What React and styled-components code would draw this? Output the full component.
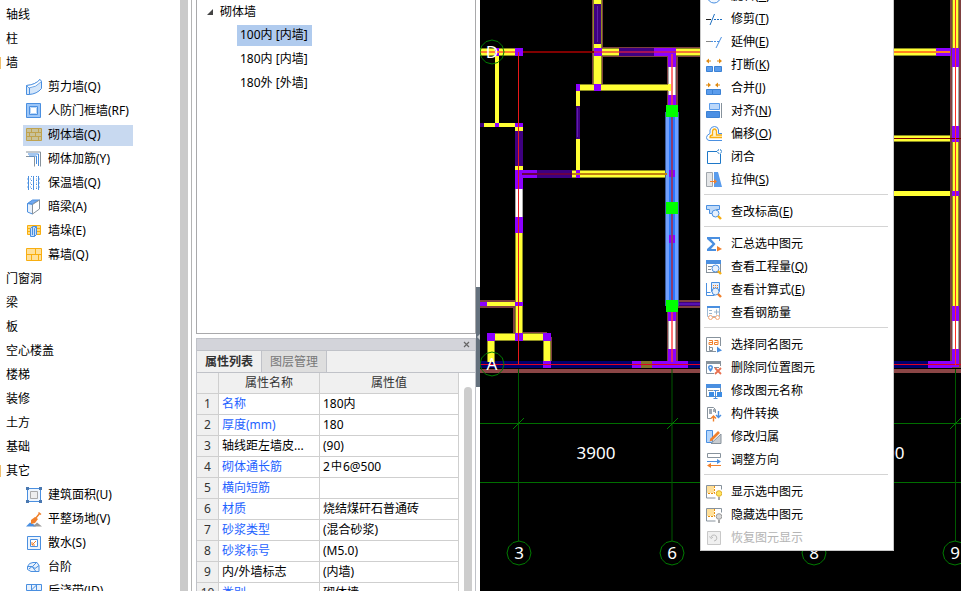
import React from "react";
import styled, { createGlobalStyle, css } from "styled-components";

const GlobalStyle = createGlobalStyle`
  * { box-sizing: border-box; }
  body { margin: 0; overflow: hidden; background: #fff; }
  body, button, table {
    font-family: "Noto Sans", "Noto Sans CJK SC", sans-serif;
    font-size: 12px;
    line-height: 20px;
    color: #000;
  }
  ul { list-style: none; margin: 0; padding: 0; }
  button { border: 0; background: none; padding: 0; text-align: left; white-space: nowrap; }
`;

const BLUE = "#4a8fe0";
const PALE = "#d4e6fa";
const ORANGE = "#f0802c";
const GOLD = "#f8ae10";
const GRAY = "#87929c";

/* ---------- icons ---------- */

const IconSvg = styled.svg`
  width: 16px;
  height: 16px;
  flex: none;
  fill: none;
  stroke-width: 1;
`;

const lens = (c = ORANGE) => (
  <>
    <circle cx="9.5" cy="9.5" r="3.5" fill="#e8f1fc" stroke={BLUE} />
    <path d="M12 12l3 3" stroke={c} strokeWidth="2.4" />
  </>
);
const frame = (
  <>
    <rect x="0.5" y="1.5" width="14" height="12" fill="#fff" stroke={GRAY} />
    <path d="M0 1h15v4H0z" fill={BLUE} />
  </>
);
const bulb = (fill, stroke) => (
  <>
    <path d="M0.5 1.5h15M0.5 1.5v12.5h9M15.5 1.5v4" stroke={GRAY} />
    <path d="M1 2h7v7H1z" fill="#ffe09a" />
    <path d="M8.5 2v7.5H1" stroke="#e89010" strokeDasharray="2 1" />
    <circle cx="13" cy="9.5" r="2.8" fill={fill} stroke={stroke} />
    <path d="M12 13h2v3h-2z" fill="#a8a8a8" />
  </>
);

const ICONS = {
  shearWall: (
    <>
      <path d="M0.5 6.5Q9 6 14 0.5l1.5 2v7Q11 15 3 15.5H0.5z" fill={PALE} stroke={BLUE} />
      <path d="M0.5 6.500L3 9Q10 8.500 15.500 2.500L14 0.500Q9 6 0.500 6.500z" fill="#fff" stroke={BLUE} strokeWidth="0.800" />
      <path d="M3.500 9v6" stroke={BLUE} />
    </>
  ),
  doorFrame: (
    <>
      <path d="M0.500 0.500h14v14h-14z" fill="#9cc6f8" stroke={BLUE} />
      <path d="M3.500 3.500h8v8h-8z" fill="#fff" stroke={BLUE} />
      <path d="M4.500 4.500h6v6h-6z" fill="#fff" stroke="#b8d6f8" />
    </>
  ),
  brick: (
    <>
      <path d="M0.500 1.500h15v12h-15z" fill="#c9c29a" stroke="#bfa24e" />
      <path d="M0.500 5.500h15M0.500 9.500h15M5.500 1.500v4M12.500 1.500v4M3.500 5.500v4M9.500 5.500v4M5.500 9.500v4M12.500 9.500v4" stroke="#bfa24e" />
    </>
  ),
  rebar: (
    <>
      <path d="M0 1h14.500v14.500M0 5.500h8.500v10" stroke={GRAY} />
      <path d="M2 3h10.500v12" stroke={BLUE} />
      <path d="M3 5h7.500v8" stroke={BLUE} />
    </>
  ),
  insulate: (
    <>
      <path d="M2.500 1v14M7.500 1v14M12.500 1v14" stroke={BLUE} />
      <path d="M5.500 1v14M10.500 1v14" stroke={BLUE} strokeDasharray="1 3" />
      <path d="M1 4h13M1 8h13M1 12h13" stroke={BLUE} strokeDasharray="1 2" strokeWidth="0.800" />
    </>
  ),
  hiddenBeam: (
    <>
      <path d="M1.500 4.500l5-3.500h7l-7 4z" fill="#70a8f0" stroke={BLUE} />
      <path d="M6.500 5.500l7-4.500v9l-7 5z" fill="#fff" stroke={GRAY} />
      <path d="M1.500 4.500l5 1v9.500l-5-2z" fill="#e8f1fc" stroke={BLUE} />
      <path d="M6.500 15V5.500" stroke={GRAY} />
    </>
  ),
  pier: (
    <>
      <path d="M1.500 2.500h13v9h-13z" fill="#ffdc80" stroke={GOLD} />
      <path d="M1.500 5.500h13M1.500 8.500h13" stroke={GOLD} />
      <path d="M4.500 5.500l2-2h4v8l-2 2h-4z" fill="#c8defa" stroke={BLUE} />
      <path d="M8.500 5.500v8M8.500 5.500l2-2M6.500 4v8" stroke={BLUE} />
    </>
  ),
  curtain: (
    <>
      <path d="M0.500 1.500h15v12h-15z" fill="#ffe09a" stroke={GOLD} />
      <path d="M0.500 7.500h15M9.500 1.500v6M5.500 7.500v6M12.500 7.500v6" stroke={GOLD} />
    </>
  ),
  area: (
    <>
      <path d="M1.500 1.500h13v13h-13z" fill="#eef5fd" stroke={BLUE} />
      <path d="M4.500 4.500h7v7h-7z" fill="#eee" stroke="#aaa" />
      <path d="M0 0h3v3H0zM13 0h3v3h-3zM0 13h3v3H0zM13 13h3v3h-3z" fill="#4a78b0" />
    </>
  ),
  ground: (
    <>
      <path d="M0 15.500l4-4 4 2 2 2z" fill={BLUE} />
      <path d="M7 15.500l4-4 5 4z" fill="#999" />
      <path d="M5 9l4-3 3 2-3 4-4 1z" fill={ORANGE} />
      <path d="M9 8l5-6M12.500 1.500l2.500 2" stroke={ORANGE} strokeWidth="1.500" />
    </>
  ),
  apron: (
    <>
      <path d="M1.500 1.500h13v13h-13z" fill="#eef5fd" stroke={BLUE} />
      <path d="M4.500 4.500h7v7h-7z" fill="#fff" stroke={BLUE} />
      <path d="M10 6l-4 4M6 7v3h3" stroke={ORANGE} />
    </>
  ),
  step: (
    <>
      <path d="M1.500 7.500Q3 3.500 7 3.500h4l2 3v6H5l-3.500-2z" fill="#e8f1fc" stroke={BLUE} />
      <path d="M1.500 7.500h5l4-4M6.500 7.500l2.500 2 4-3M3 10l3-2.500 4 5" stroke={BLUE} />
    </>
  ),
  strip: (
    <>
      <path d="M0.500 1.500h15v6h-15z" fill="#e8f1fc" stroke={BLUE} />
      <path d="M5.500 1.500v11M10.500 1.500v11M5.500 7l5-5M3 7.500v5h9v-5" stroke={BLUE} />
    </>
  ),
  rotate: <circle cx="8" cy="8.500" r="6.500" stroke={BLUE} fill="#f2f8ff" />,
  trim: (
    <>
      <path d="M0 8.500h5" stroke="#222" />
      <path d="M8 8.500h8" stroke="#1e6fc0" strokeDasharray="2 1" />
      <path d="M4 14L8.500 3" stroke="#1e6fc0" />
    </>
  ),
  extend: (
    <>
      <path d="M0 7.500h5" stroke="#888" />
      <path d="M5 7.500h8" stroke={BLUE} strokeDasharray="2 1" />
      <path d="M10 14l5.500-11" stroke={BLUE} />
    </>
  ),
  split: (
    <>
      <path d="M0.500 9.500h6v5h-6zM8.500 9.500h7v5h-7z" fill="#5a9cec" stroke="#3c82d4" />
      <path d="M1 4h4M11 4h4" stroke="#e08a10" />
      <path d="M0 4l3-2.500v5zM16 4l-3-2.500v5z" fill="#e08a10" />
    </>
  ),
  merge: (
    <>
      <path d="M0.500 9.500h6v5h-6zM6.500 9.500h8v5h-8z" fill="#5a9cec" stroke="#3c82d4" />
      <path d="M0 5h4M10 5h4" stroke="#e08a10" />
      <path d="M5 5L2 2.500v5zM9 5l3-2.500v5z" fill="#e08a10" />
    </>
  ),
  align: (
    <>
      <path d="M3.500 0.500h10v6h-10z" fill="#bcd8fa" stroke="#5a9cec" />
      <path d="M0.500 8.500h13v6h-13z" fill="#4a8fe4" stroke="#3c82d4" />
      <path d="M15.500 0v15" stroke={GRAY} />
    </>
  ),
  offset: (
    <>
      <path d="M16 14.500H3Q0.500 14 0.500 11.500T4 7.500V4Q5 0.500 8.500 0.500T12.500 4v3.500H16" stroke={BLUE} />
      <path d="M16 11.500H4Q4 9 6.500 9V5Q7 3 8.500 3T10.500 5v4H16" fill="#fff4d0" stroke={GOLD} strokeWidth="1.300" />
    </>
  ),
  close: (
    <>
      <path d="M11 2.500H1.500v12h13V5" stroke="#1e78c8" />
      <circle cx="13.500" cy="2.500" r="2" stroke="#1e78c8" strokeDasharray="2 1" />
    </>
  ),
  stretch: (
    <>
      <path d="M0.500 0.500h6v14h-6z" fill="#e4e6e8" stroke="#a0a6ac" />
      <path d="M8 0h4l4 15H8z" fill="#5a9cec" />
      <path d="M4 9.500h5" stroke={ORANGE} />
      <path d="M11 9.500L8 7v5z" fill={ORANGE} />
    </>
  ),
  level: (
    <>
      <path d="M0.500 1.500h13v4h-3v4h-7V5.500h-3z" fill="#c0daf8" stroke={BLUE} />
      {lens(GOLD)}
    </>
  ),
  sum: (
    <>
      <path d="M14 1H1v2l5.500 5L1 13v2h9v-2H5l4.500-5L5 3h8v2h1z" fill={BLUE} />
      <path d="M11 10v5.500l5-2.500z" fill={ORANGE} />
    </>
  ),
  quantity: (
    <>
      {frame}
      <path d="M2 7.500h4M2 10.500h3" stroke={GRAY} />
      {lens(GOLD)}
    </>
  ),
  formula: (
    <>
      <path d="M0.500 1v12.500h8M0.500 10.500h4" stroke={BLUE} />
      <path d="M5.500 0.500h8v9h-8z" fill="#dfeeff" stroke={BLUE} />
      <path d="M7 3.500h6M7 5.500h6" stroke={ORANGE} strokeDasharray="1 1" />
      {lens()}
    </>
  ),
  steel: (
    <>
      <path d="M1.500 1.500h12v10h-12z" fill="#fff" stroke="#9cb8d4" />
      <path d="M1 1h13v2H1z" fill={BLUE} />
      <path d="M3 5.500h3M3 8.500h3M8 7h5M10.500 4.500v5" stroke="#9ab4cc" />
      <circle cx="4.500" cy="12.500" r="2" fill="#fff" stroke="#f4a878" />
      <circle cx="11.500" cy="12.500" r="2" fill="#fff" stroke="#f4a878" />
      <path d="M6.500 12.500h3" stroke="#f4a878" />
    </>
  ),
  sameName: (
    <>
      <path d="M10 14.500H0.500v-14h14V9" stroke={GRAY} />
      <path d="M3 3.500h3.500v4H3v-2h3M8.500 3.500H12v4H8.500v-2h3" stroke={ORANGE} />
      <path d="M3.500 9v4.500h3v-3h-3" stroke={GRAY} />
      <path d="M11 9.500v6l5-2z" fill={BLUE} />
    </>
  ),
  remove: (
    <>
      <path d="M14.500 6V1.500h-14v12H8" stroke={GRAY} />
      <path d="M0 1h15v3H0z" fill={GRAY} />
      <path d="M4.500 12Q2 9 2 7.500a2.500 2.500 0 0 1 5 0Q7 9 4.500 12z" fill={BLUE} />
      <circle cx="4.500" cy="7.500" r="1" fill="#fff" />
      <path d="M8 7.500h5" stroke={GRAY} />
      <path d="M9 8l6 6M15 8l-6 6" stroke="#e87050" strokeWidth="1.800" />
    </>
  ),
  rename: (
    <>
      {frame}
      <path d="M2 7.500h5M8 7.500h5" stroke={GRAY} />
      <path d="M3 9h5v5H3zM11 9h5v5h-5z" fill="#3c8ce4" />
      <path d="M7.500 7.500h4M9.500 8v7M7.500 15.500h4" stroke={BLUE} />
    </>
  ),
  convert: (
    <>
      <path d="M5 12.500H1.500v-11h6l2 2V7" stroke={GRAY} />
      <path d="M3 3h3v5H3zM7 3h2v3H7z" fill="#a0aab4" />
      <path d="M7.500 15.500V11M5 12.500L7.500 10l2.500 2.500" stroke={ORANGE} strokeWidth="1.400" />
      <path d="M12.500 5v6M10 9l2.500 2.500L15 9" stroke={BLUE} strokeWidth="1.400" />
    </>
  ),
  belong: (
    <>
      <path d="M0.500 1.500h6v12h-6z" fill="#b4d6fc" stroke={BLUE} />
      <path d="M5 14.500L15 5v9.500z" fill="#c8ccd0" stroke={GRAY} />
      <path d="M5 11l8-8" stroke={ORANGE} strokeWidth="2.600" />
      <path d="M3.500 12.500l1-3 2 2z" fill={ORANGE} />
    </>
  ),
  direction: (
    <>
      <path d="M1.500 1.500h13v4h-13z" stroke={GRAY} />
      <path d="M1 9.500h11" stroke={BLUE} />
      <path d="M15 9.500l-4-2.500v5z" fill={BLUE} />
      <path d="M4 13.500h11" stroke={ORANGE} />
      <path d="M1 13.500l4-2.500v5z" fill={ORANGE} />
    </>
  ),
  show: bulb("#ffe45c", "#e0b030"),
  hide: bulb("#d8d8d8", "#999"),
  restore: (
    <>
      <path d="M1.500 1.500h13v13h-13z" fill="#f0f0f0" stroke="#c8c8c8" />
      <path d="M5 7a3 3 0 1 1 3 4M3.500 6.500L5 8.500l2-1.500" stroke="#bbb" />
    </>
  ),
};

const Icon = ({ name }) => (
  <IconSvg viewBox="0 0 16 16" aria-hidden="true">{ICONS[name]}</IconSvg>
);

/* ---------- layout ---------- */

const Page = styled.main`
  display: grid;
  grid-template-columns: 192px 284px 4px minmax(0, 1fr);
  grid-template-rows: minmax(0, 1fr);
  height: 100vh;
  overflow: hidden;
`;

const Sidebar = styled.nav`
  display: flex;
  min-height: 0;
  overflow: hidden;
  border-right: 1px solid #b4b4b4;
`;

const SidebarTree = styled.ul`
  flex: 1;
  padding-top: 3px;
`;

const SidebarScroll = styled.div`
  width: 8px;
  margin-right: 3px;
  background: #cacaca;
`;

const Category = styled.button`
  display: flex;
  align-items: center;
  width: 100%;
  height: 24px;
  padding-left: 5px;
  &::before {
    content: "";
    width: 1px;
    height: 12px;
    margin: 0 5px 0 -5px;
    background: ${(p) => (p.$open ? "#efbe6c" : "transparent")};
  }
`;

const CategoryItems = styled.ul`
  width: max-content;
  margin-left: 23px;
`;

const TreeRow = styled.li`
  display: flex;
  align-items: center;
  height: 24px;
`;

const TreeButton = styled.button`
  display: flex;
  align-items: center;
  gap: 6px;
  width: 100%;
  height: 21px;
  padding: 0 4px 0 3px;
  background: ${(p) => (p.$selected ? "#c8d9f0" : "transparent")};
`;

const MiddleColumn = styled.div`
  display: grid;
  grid-template-rows: minmax(0, 334fr) minmax(0, 253fr);
  gap: 4px;
  padding-left: 4px;
`;

const ComponentPanel = styled.section`
  border: solid #a9a9ab;
  border-width: 0 1px 1px;
  overflow: hidden;
`;

const ComponentGroup = styled.button`
  display: flex;
  align-items: center;
  gap: 7px;
  height: 23px;
  padding-left: 10px;
`;

const Twisty = styled.svg`
  width: 6px;
  height: 6px;
`;

const ComponentList = styled.ul`
  width: max-content;
  margin-left: 40px;
`;

const ComponentButton = styled(TreeButton)`
  background: ${(p) => (p.$selected ? "#b0cbee" : "transparent")};
`;

const PropertyPanel = styled.section`
  display: flex;
  flex-direction: column;
  overflow: hidden;
  border: 1px solid #c0c2c8;
  border-bottom: 0;
  background: #f0f0f0;
`;

const TitleBar = styled.header`
  display: flex;
  flex: none;
  justify-content: flex-end;
  align-items: center;
  height: 12px;
  padding-right: 5px;
  background: #d3d4da;
  border-bottom: 1px solid #c0c2c8;
`;

const CloseButton = styled.button`
  display: flex;
  width: 7px;
  height: 7px;
`;

const Tabs = styled.div`
  display: flex;
  flex: none;
  height: 22px;
  border-bottom: 1px solid #c0c2c8;
`;

const Tab = styled.button`
  padding: 0 8px;
  font-weight: ${(p) => (p.$active ? 700 : 400)};
  border-right: 1px solid #c0c2c8;
  color: ${(p) => (p.$active ? "#333" : "#777")};
  background: ${(p) => (p.$active ? "#f0f0f0" : "#dedede")};
`;

const TableArea = styled.div`
  display: flex;
  flex: 1;
  min-height: 0;
`;

const PropertyTable = styled.table`
  flex: 1;
  height: max-content;
  table-layout: fixed;
  border-collapse: separate;
  border-spacing: 0;
  background: #fff;
`;

const cell = css`
  height: 21px;
  padding: 0 3px;
  border: solid #cfcfcf;
  border-width: 0 1px 1px 0;
  font-weight: 400;
  text-align: left;
  white-space: nowrap;
  overflow: hidden;
`;

const HeadCell = styled.th`
  ${cell}
  width: ${(p) => p.$width || "auto"};
  text-align: center;
  color: #333;
  background: #f0f0f0;
`;

const NumberCell = styled.th`
  ${cell}
  text-align: center;
  color: #333;
  background: #f0f0f0;
`;

const NameCell = styled.td`
  ${cell}
  color: ${(p) => (p.$plain ? "#000" : "#1e62ff")};
`;

const ValueCell = styled.td`
  ${cell}
`;

const RebarMark = styled.span`
  margin: 0 1px;
  font-size: 11px;
  line-height: 1;
  vertical-align: 1px;
`;

const TableGutter = styled.div`
  width: 16px;
  padding: 14px 3px 0 5px;
  background: #fff;
`;

const TableThumb = styled.div`
  height: 100%;
  border-radius: 4px 4px 0 0;
  background: #cdcdcd;
`;

const Splitter = styled.div`
  display: flex;
  flex-direction: column;
  justify-content: flex-start;
  padding-top: 287px;
`;

const SplitterHandle = styled.button`
  display: flex;
  align-items: center;
  justify-content: flex-end;
  height: 100px;
  background: #64717d;
`;

const CanvasArea = styled.section`
  position: relative;
  overflow: hidden;
  background: #000;
`;

const Drawing = styled.svg`
  display: block;
  width: 100%;
  height: 100%;
  font-family: "Noto Sans", sans-serif;
  font-size: 17px;
`;

const ContextMenu = styled.ul`
  position: absolute;
  left: 220px;
  top: -17px;
  width: 194px;
  padding-bottom: 1px;
  background: #fff;
  border: 1px solid #c8c8c8;
`;

const MenuButton = styled.button`
  display: flex;
  align-items: center;
  gap: 9px;
  width: 100%;
  height: 23px;
  padding-left: 5px;
  &:disabled { color: #b4b4b4; }
`;

const MenuDivider = styled.li`
  height: 1px;
  margin: 3px 5px 5px 3px;
  background: #d4d4d4;
`;

/* ---------- data ---------- */

const CATEGORIES = [
  { label: "轴线" },
  { label: "柱" },
  {
    label: "墙",
    items: [
      ["shearWall", "剪力墙(Q)"],
      ["doorFrame", "人防门框墙(RF)"],
      ["brick", "砌体墙(Q)", true],
      ["rebar", "砌体加筋(Y)"],
      ["insulate", "保温墙(Q)"],
      ["hiddenBeam", "暗梁(A)"],
      ["pier", "墙垛(E)"],
      ["curtain", "幕墙(Q)"],
    ],
  },
  { label: "门窗洞" },
  { label: "梁" },
  { label: "板" },
  { label: "空心楼盖" },
  { label: "楼梯" },
  { label: "装修" },
  { label: "土方" },
  { label: "基础" },
  {
    label: "其它",
    items: [
      ["area", "建筑面积(U)"],
      ["ground", "平整场地(V)"],
      ["apron", "散水(S)"],
      ["step", "台阶"],
      ["strip", "后浇带(JD)"],
    ],
  },
];

const COMPONENTS = ["100内 [内墙]", "180内 [内墙]", "180外 [外墙]"];

const PROPERTIES = [
  ["名称", "180内"],
  ["厚度(mm)", "180"],
  ["轴线距左墙皮...", "(90)", true],
  ["砌体通长筋", <>2<RebarMark>中</RebarMark>6@500</>],
  ["横向短筋", ""],
  ["材质", "烧结煤矸石普通砖"],
  ["砂浆类型", "(混合砂浆)"],
  ["砂浆标号", "(M5.0)"],
  ["内/外墙标志", "(内墙)", true],
  ["类别", "砌体墙"],
];

const MENU_GROUPS = [
  [
    ["rotate", "旋转", "R"],
    ["trim", "修剪", "T"],
    ["extend", "延伸", "E"],
    ["split", "打断", "K"],
    ["merge", "合并", "J"],
    ["align", "对齐", "N"],
    ["offset", "偏移", "O"],
    ["close", "闭合"],
    ["stretch", "拉伸", "S"],
  ],
  [["level", "查改标高", "E"]],
  [
    ["sum", "汇总选中图元"],
    ["quantity", "查看工程量", "Q"],
    ["formula", "查看计算式", "E"],
    ["steel", "查看钢筋量"],
  ],
  [
    ["sameName", "选择同名图元"],
    ["remove", "删除同位置图元"],
    ["rename", "修改图元名称"],
    ["convert", "构件转换"],
    ["belong", "修改归属"],
    ["direction", "调整方向"],
  ],
  [
    ["show", "显示选中图元"],
    ["hide", "隐藏选中图元"],
    ["restore", "恢复图元显示", null, true],
  ],
];

/* ---------- floor plan ---------- */

const BROWN = "#7e4040";
const NAVY = "#00006e";
const Y = "#ffff33";
const P = "#8c00ff";
const I = "#3e0080";
const W = "#ffffff";
const EDGES = { [Y]: "#8c8c20", [W]: "#a8a8a8" };

// [x, y, width, height, fill]
const WALLS = [
  [480, 369, 481, 4, "#8b4646"], [480, 361, 481, 7, NAVY],
  [480, 300, 42, 8, BROWN], [513, 304, 3, 30, BROWN], [519, 332, 28, 3, BROWN], [549, 337, 3, 24, BROWN],
  [592, 0, 11, 86, BROWN], [601, 47, 99, 10, BROWN], [667, 56, 11, 50, BROWN], [667, 312, 11, 50, BROWN],
  [678, 300, 22, 8, BROWN], [950, 0, 11, 368, BROWN],
  [480, 48, 35, 8, Y], [495, 48, 4, 8, P], [515, 48, 8, 8, P],
  [495, 56, 4, 67, Y], [480, 123, 4, 4, I], [484, 123, 31, 4, Y], [495, 123, 4, 4, P], [515, 123, 8, 4, P],
  [515, 127, 8, 4, Y], [515, 131, 8, 35, I], [515, 166, 8, 4, Y], [515, 170, 8, 19, P],
  [515, 189, 8, 28, W], [515, 217, 8, 16, P], [515, 233, 8, 100, Y], [515, 302, 8, 4, P],
  [480, 302, 7, 4, P], [487, 302, 28, 4, Y], [488, 333, 62, 8, Y], [487, 341, 8, 21, Y], [543, 341, 8, 20, Y],
  [487, 333, 8, 8, P], [515, 333, 8, 8, P], [543, 333, 8, 8, P], [543, 361, 8, 7, P],
  [522, 170, 15, 8, P], [537, 170, 35, 8, I], [572, 170, 95, 8, Y],
  [576, 91, 4, 79, Y], [576, 106, 4, 33, I], [576, 170, 4, 8, P], [580, 84, 91, 7, Y], [576, 84, 4, 7, P],
  [593, 0, 9, 84, Y], [594, 4, 7, 40, I], [594, 48, 8, 8, P], [594, 84, 7, 7, P],
  [602, 48, 98, 8, Y], [619, 48, 35, 8, I], [654, 48, 22, 8, P],
  [668, 56, 8, 50, P], [668, 67, 8, 28, W], [668, 84, 3, 7, Y],
  [668, 312, 8, 50, P], [668, 321, 8, 28, W],
  [632, 361, 56, 7, P], [641, 361, 11, 7, "#80702a"], [678, 302, 22, 4, I],
  [894, 48, 56, 8, Y], [936, 48, 15, 8, P], [894, 135, 56, 7, Y], [894, 191, 56, 5, Y],
  [952, 0, 7, 306, Y], [952, 48, 7, 19, P], [952, 67, 7, 59, W], [952, 126, 7, 16, P], [952, 191, 7, 5, P],
  [952, 306, 7, 15, P], [952, 321, 7, 28, W], [952, 349, 7, 18, P], [928, 361, 24, 7, P],
  [665, 112, 14, 194, "#3c5c9c"], [666, 112, 12, 194, "#6f9fff"], [669, 112, 6, 194, "#2878ff"],
  [669, 170, 6, 7, P], [669, 235, 6, 8, P],
];

// [path, colour, width]
const AXES = [
  ["M480 52h35", "#ff8030", 2], ["M523 52h71", "#800000", 2], ["M594 52h106", "rgba(230,30,60,0.6)", 2],
  ["M522 174h50", "#6a0048", 2], ["M572 174h95", "#c08010", 2],
  ["M597.500 6v36M577.500 108v29", "#6020a8", 1], ["M679 304h21", "#7020e0", 1],
  ["M518.500 52v312", "#e81818", 1],
  ["M672 54v52M672 312v50", "rgba(255,60,60,0.7)", 2], ["M672 112v194", "#8c3c70", 2],
  ["M480 364.500h481", "#e00020", 1],
  ["M894 52h56", "#ff8020", 2], ["M894 138.500h67", "#800000", 1], ["M955.500 0v365", "#ff3020", 1],
  ["M480 423.500h481M480 482.500h481", "#006e00", 1],
  ["M518.500 369v172M672 369v172M955.500 369v172M813.500 369v172", "#005800", 1],
  ["M513 429l11-11M667 429l11-11M950 429l11-11", "#008000", 1],
];

const BUBBLES = [
  ["D", 492, 52], ["A", 492, 364], ["3", 519, 553], ["6", 672, 553], ["8", 814, 553], ["9", 955, 553],
];

const GRIPS = [105, 202, 300];

const bubblePath = (cx, cy) => {
  const points = Array.from({ length: 12 }, (_, i) => {
    const a = (i * Math.PI) / 6;
    return `${cx + 12 * Math.sin(a)},${cy - 12 * Math.cos(a)}`;
  });
  return points.join(" ");
};

function Wall({ wall: [x, y, w, h, fill] }) {
  const edge = EDGES[fill];
  if (!edge || Math.max(w, h) < 10 || Math.min(w, h) < 7) {
    return <rect x={x} y={y} width={w} height={h} fill={fill} />;
  }
  const across = w > h;
  return (
    <>
      <rect x={x} y={y} width={w} height={h} fill={edge} />
      <rect
        x={across ? x : x + 1}
        y={across ? y + 1 : y}
        width={across ? w : w - 2}
        height={across ? h - 2 : h}
        fill={fill}
      />
    </>
  );
}

function FloorPlan() {
  return (
    <Drawing role="img" aria-label="平面图">
      <g transform="translate(-480 0)">
        <g shapeRendering="crispEdges">
          {WALLS.map((wall, i) => <Wall key={i} wall={wall} />)}
        </g>
        {AXES.map(([d, stroke, width]) => (
          <path key={d} d={d} stroke={stroke} strokeWidth={width} fill="none" />
        ))}
        {GRIPS.map((y) => (
          <rect key={y} x="666" y={y} width="12" height="12" fill="#00ff00" />
        ))}
        {BUBBLES.map(([label, x, y]) => (
          <g key={label}>
            <polygon points={bubblePath(x, y)} fill="none" stroke="#007c00" />
            <text x={x} y={y + 6} fill="#fff" textAnchor="middle">{label}</text>
          </g>
        ))}
        <text x="596" y="459" fill="#fff" textAnchor="middle">3900</text>
        <text x="885" y="459" fill="#fff" textAnchor="middle">3900</text>
      </g>
    </Drawing>
  );
}

/* ---------- app ---------- */

export default function App() {
  return (
    <>
      <GlobalStyle />
      <Page>
        <Sidebar aria-label="构件类型">
          <SidebarTree>
            {CATEGORIES.map(({ label, items }) => (
              <li key={label}>
                <Category $open={!!items}>{label}</Category>
                {items && (
                  <CategoryItems>
                    {items.map(([icon, text, selected]) => (
                      <TreeRow key={text}>
                        <TreeButton $selected={selected}>
                          <Icon name={icon} />
                          {text}
                        </TreeButton>
                      </TreeRow>
                    ))}
                  </CategoryItems>
                )}
              </li>
            ))}
          </SidebarTree>
          <SidebarScroll />
        </Sidebar>

        <MiddleColumn>
          <ComponentPanel>
            <ComponentGroup>
              <Twisty viewBox="0 0 6 6"><path d="M6 0v6H0z" fill="#444" /></Twisty>
              砌体墙
            </ComponentGroup>
            <ComponentList>
              {COMPONENTS.map((name, i) => (
                <TreeRow key={name}>
                  <ComponentButton $selected={i === 0}>{name}</ComponentButton>
                </TreeRow>
              ))}
            </ComponentList>
          </ComponentPanel>

          <PropertyPanel>
            <TitleBar>
              <CloseButton aria-label="关闭">
                <svg width="7" height="7" viewBox="0 0 7 7">
                  <path d="M1 1l5 5M6 1L1 6" stroke="#666" strokeWidth="1.200" />
                </svg>
              </CloseButton>
            </TitleBar>
            <Tabs role="tablist">
              <Tab role="tab" aria-selected="true" $active>属性列表</Tab>
              <Tab role="tab" aria-selected="false">图层管理</Tab>
            </Tabs>
            <TableArea>
              <PropertyTable>
                <thead>
                  <tr>
                    <HeadCell $width="22px" />
                    <HeadCell $width="101px">属性名称</HeadCell>
                    <HeadCell>属性值</HeadCell>
                  </tr>
                </thead>
                <tbody>
                  {PROPERTIES.map(([name, value, plain], i) => (
                    <tr key={name}>
                      <NumberCell scope="row">{i + 1}</NumberCell>
                      <NameCell $plain={plain}>{name}</NameCell>
                      <ValueCell>{value}</ValueCell>
                    </tr>
                  ))}
                </tbody>
              </PropertyTable>
              <TableGutter><TableThumb /></TableGutter>
            </TableArea>
          </PropertyPanel>
        </MiddleColumn>

        <Splitter>
          <SplitterHandle aria-label="折叠面板">
            <svg width="3" height="6" viewBox="0 0 3 6"><path d="M3 0v6L0 3z" fill="#c8ccd0" /></svg>
          </SplitterHandle>
        </Splitter>

        <CanvasArea>
          <FloorPlan />
          <ContextMenu>
            {MENU_GROUPS.map((group, g) => (
              <React.Fragment key={g}>
                {g > 0 && <MenuDivider role="separator" />}
                {group.map(([icon, text, hotkey, disabled]) => (
                  <li key={text}>
                    <MenuButton disabled={disabled}>
                      <Icon name={icon} />
                      <span>{text}{hotkey && <>(<u>{hotkey}</u>)</>}</span>
                    </MenuButton>
                  </li>
                ))}
              </React.Fragment>
            ))}
          </ContextMenu>
        </CanvasArea>
      </Page>
    </>
  );
}
